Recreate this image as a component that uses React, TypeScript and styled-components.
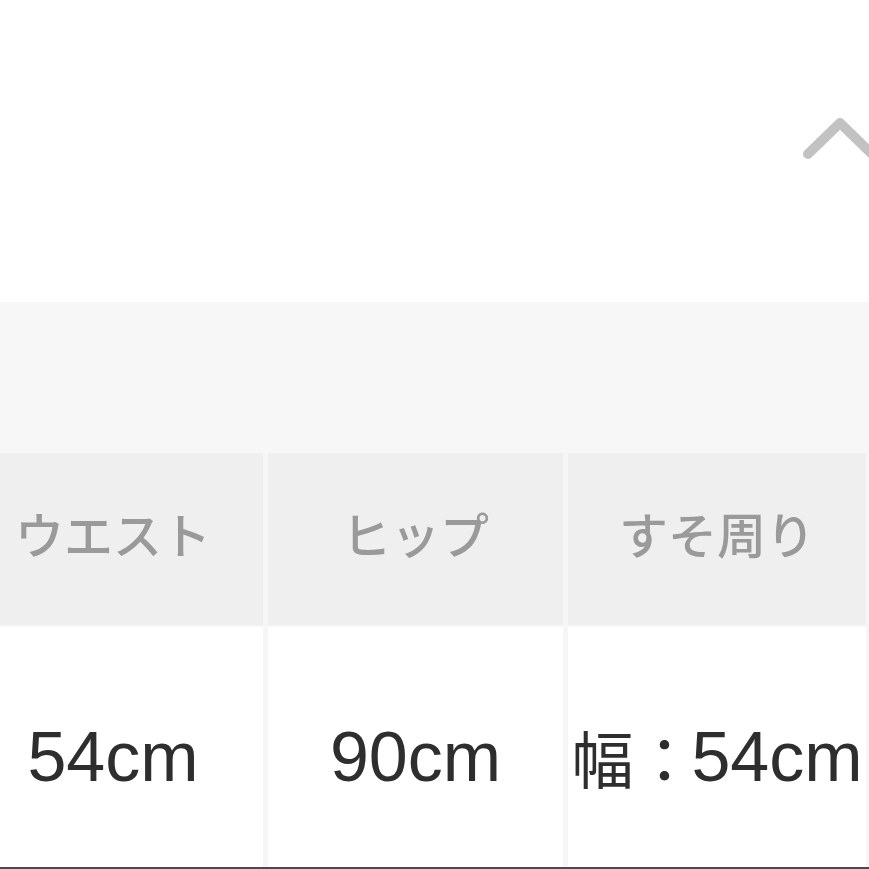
import React from "react";
import styled, { createGlobalStyle } from "styled-components";

const Global = createGlobalStyle`
  html, body { margin: 0; padding: 0; background: #ffffff; overflow: hidden; }
  body { font-family: "Liberation Sans", "Noto Sans CJK JP", sans-serif; }
`;

const Page = styled.div`
  width: 869px;
  height: 869px;
  overflow: hidden;
  position: relative;
  background: #ffffff;
`;

const TopBar = styled.div`
  height: 302px;
  display: flex;
  justify-content: flex-end;
  align-items: flex-start;
  padding-top: 112px;
  box-sizing: border-box;
`;

const Chevron = styled.svg`
  display: block;
  width: 74px;
  height: 52px;
  margin-right: -8px;
`;

const Band = styled.div`
  height: 151px;
  background: #f7f7f7;
`;

const Table = styled.div`
  display: grid;
  grid-template-columns: 300px 295px 298px;
  grid-template-rows: 172px 260px;
  column-gap: 5px;
  row-gap: 2px;
  margin-left: -37px;
  width: 906px;
  background: #f6f6f6;
`;

const HeadCell = styled.div`
  background: #efefef;
  display: flex;
  align-items: center;
  justify-content: center;
  padding-bottom: 14px;
  box-sizing: border-box;
  font-family: "Noto Sans CJK JP", sans-serif;
  font-weight: 500;
  font-size: 49px;
  color: #9a9a9a;
`;

const DataCell = styled.div`
  background: #ffffff;
  display: flex;
  align-items: center;
  justify-content: center;
  font-family: "Liberation Sans", "Noto Sans CJK JP", sans-serif;
  font-size: 70px;
  color: #2e2e2e;
  white-space: nowrap;
`;

const Cjk = styled.span`
  font-family: "Noto Sans CJK JP", sans-serif;
  font-size: 62px;
  margin-right: -4px;
`;

const BottomLine = styled.div`
  position: absolute;
  left: 0;
  right: 0;
  bottom: 0;
  height: 2px;
  background: #4a4a4a;
`;

export default function App() {
  return (
    <Page>
      <Global />
      <TopBar>
        <Chevron viewBox="0 0 74 52">
          <path
            d="M5 42 L37 11 L69 42"
            fill="none"
            stroke="#c2c2c2"
            strokeWidth="10"
            strokeLinecap="round"
            strokeLinejoin="round"
          />
        </Chevron>
      </TopBar>
      <Band />
      <Table>
        <HeadCell>ウエスト</HeadCell>
        <HeadCell>ヒップ</HeadCell>
        <HeadCell>すそ周り</HeadCell>
        <DataCell>54cm</DataCell>
        <DataCell>90cm</DataCell>
        <DataCell>
          <Cjk>幅：</Cjk>54cm
        </DataCell>
      </Table>
      <BottomLine />
    </Page>
  );
}
